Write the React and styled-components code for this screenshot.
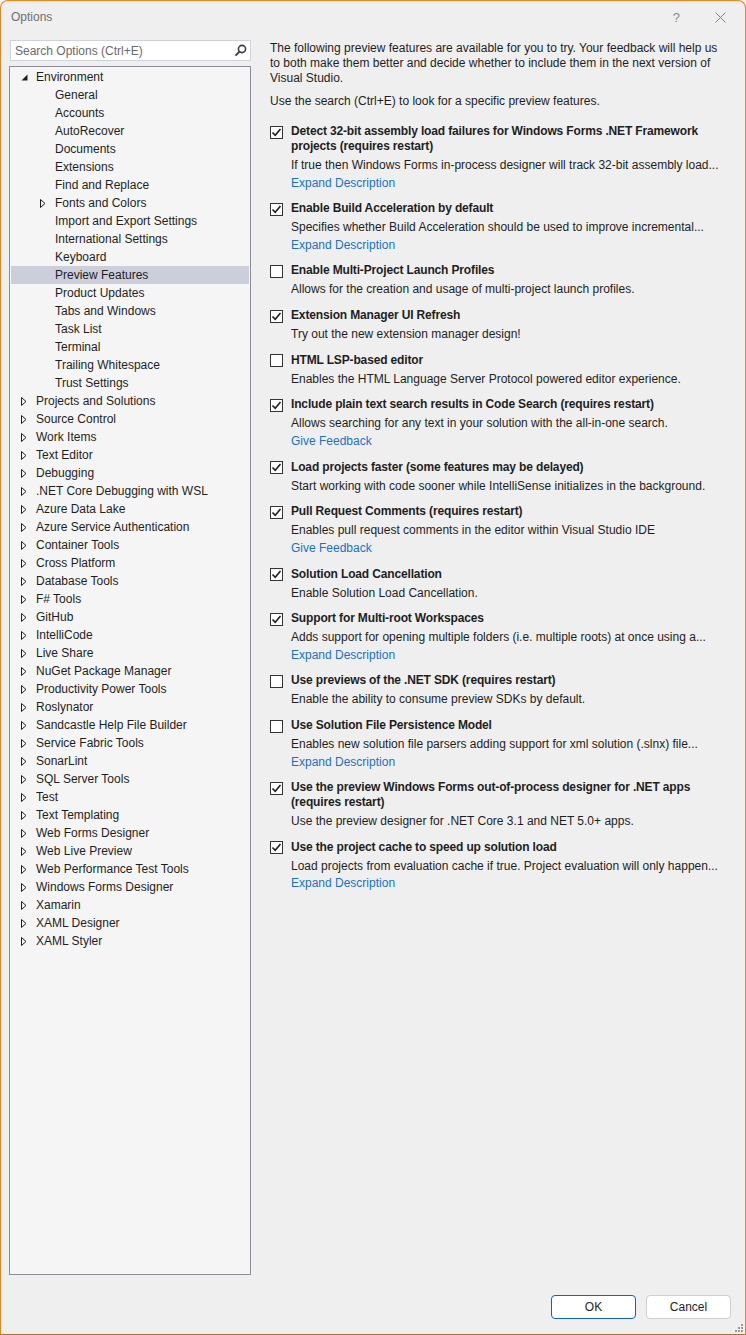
import React from 'react'
import styled, { createGlobalStyle } from 'styled-components';

const GlobalStyle = createGlobalStyle`
    html, body {
        margin: 0;
        padding: 0;
        background: #f3f3f3;
    }
    body {
        font-family: "Liberation Sans", Arial, sans-serif;
        font-size: 12px;
        color: #1e1e1e;
    }
`;

const treeItems = [
    { label: 'Environment', level: 0, state: 'open' },
    { label: 'General', level: 1 },
    { label: 'Accounts', level: 1 },
    { label: 'AutoRecover', level: 1 },
    { label: 'Documents', level: 1 },
    { label: 'Extensions', level: 1 },
    { label: 'Find and Replace', level: 1 },
    { label: 'Fonts and Colors', level: 1, state: 'closed' },
    { label: 'Import and Export Settings', level: 1 },
    { label: 'International Settings', level: 1 },
    { label: 'Keyboard', level: 1 },
    { label: 'Preview Features', level: 1, selected: true },
    { label: 'Product Updates', level: 1 },
    { label: 'Tabs and Windows', level: 1 },
    { label: 'Task List', level: 1 },
    { label: 'Terminal', level: 1 },
    { label: 'Trailing Whitespace', level: 1 },
    { label: 'Trust Settings', level: 1 },
    ...[
        'Projects and Solutions', 'Source Control', 'Work Items', 'Text Editor', 'Debugging',
        '.NET Core Debugging with WSL', 'Azure Data Lake', 'Azure Service Authentication',
        'Container Tools', 'Cross Platform', 'Database Tools', 'F# Tools', 'GitHub', 'IntelliCode',
        'Live Share', 'NuGet Package Manager', 'Productivity Power Tools', 'Roslynator',
        'Sandcastle Help File Builder', 'Service Fabric Tools', 'SonarLint', 'SQL Server Tools',
        'Test', 'Text Templating', 'Web Forms Designer', 'Web Live Preview',
        'Web Performance Test Tools', 'Windows Forms Designer', 'Xamarin', 'XAML Designer', 'XAML Styler',
    ].map(label => ({ label, level: 0, state: 'closed' })),
];

const features = [
    { checked: true, title: 'Detect 32-bit assembly load failures for Windows Forms .NET Framework projects (requires restart)', desc: 'If true then Windows Forms in-process designer will track 32-bit assembly load...', link: 'Expand Description' },
    { checked: true, title: 'Enable Build Acceleration by default', desc: 'Specifies whether Build Acceleration should be used to improve incremental...', link: 'Expand Description' },
    { checked: false, title: 'Enable Multi-Project Launch Profiles', desc: 'Allows for the creation and usage of multi-project launch profiles.' },
    { checked: true, title: 'Extension Manager UI Refresh', desc: 'Try out the new extension manager design!' },
    { checked: false, title: 'HTML LSP-based editor', desc: 'Enables the HTML Language Server Protocol powered editor experience.' },
    { checked: true, title: 'Include plain text search results in Code Search (requires restart)', desc: 'Allows searching for any text in your solution with the all-in-one search.', link: 'Give Feedback' },
    { checked: true, title: 'Load projects faster (some features may be delayed)', desc: 'Start working with code sooner while IntelliSense initializes in the background.' },
    { checked: true, title: 'Pull Request Comments (requires restart)', desc: 'Enables pull request comments in the editor within Visual Studio IDE', link: 'Give Feedback' },
    { checked: true, title: 'Solution Load Cancellation', desc: 'Enable Solution Load Cancellation.' },
    { checked: true, title: 'Support for Multi-root Workspaces', desc: 'Adds support for opening multiple folders (i.e. multiple roots) at once using a...', link: 'Expand Description' },
    { checked: false, title: 'Use previews of the .NET SDK (requires restart)', desc: 'Enable the ability to consume preview SDKs by default.' },
    { checked: false, title: 'Use Solution File Persistence Model', desc: 'Enables new solution file parsers adding support for xml solution (.slnx) file...', link: 'Expand Description' },
    { checked: true, title: 'Use the preview Windows Forms out-of-process designer for .NET apps (requires restart)', desc: 'Use the preview designer for .NET Core 3.1 and NET 5.0+ apps.' },
    { checked: true, title: 'Use the project cache to speed up solution load', desc: 'Load projects from evaluation cache if true. Project evaluation will only happen...', link: 'Expand Description' },
];

const TreeArrow = ({ state }) => {
    if (state === 'open') {
        return (
            <svg width="7" height="7" viewBox="0 0 7 7">
                <polygon points="6.5,0.5 6.5,6.5 0.5,6.5" fill="#1e1e1e" />
            </svg>
        );
    }
    if (state === 'closed') {
        return (
            <svg width="6" height="9" viewBox="0 0 6 9">
                <polygon points="0.5,0.5 5,4.5 0.5,8.5" fill="none" stroke="#1e1e1e" strokeWidth="1" />
            </svg>
        );
    }
    return null;
};

const CheckBox = ({ checked }) => (
    <Box>
        {checked && (
            <svg width="11" height="11" viewBox="0 0 11 11">
                <polyline points="1.5,5.5 4.2,8.3 9.5,2" fill="none" stroke="#1e1e1e" strokeWidth="1.6" />
            </svg>
        )}
    </Box>
);

const App = () => {
    return (
        <>
            <GlobalStyle />
            <Window>
                <TitleBar>
                    <span className='title'>Options</span>
                    <div className='caption-buttons'>
                        <span className='help'>?</span>
                        <svg width="11" height="11" viewBox="0 0 11 11">
                            <path d="M0.5 0.5 L10.5 10.5 M10.5 0.5 L0.5 10.5" stroke="#808080" strokeWidth="1" />
                        </svg>
                    </div>
                </TitleBar>

                <Body>
                    <LeftColumn>
                        <SearchBox>
                            <span>Search Options (Ctrl+E)</span>
                            <svg width="13" height="13" viewBox="0 0 13 13">
                                <circle cx="8" cy="5" r="3.6" fill="none" stroke="#3c3c3c" strokeWidth="1.6" />
                                <path d="M5.5 7.6 L1.5 11.6" stroke="#3c3c3c" strokeWidth="2" />
                            </svg>
                        </SearchBox>
                        <Tree>
                            {treeItems.map(item => (
                                <TreeRow key={item.label} $level={item.level} $selected={item.selected}>
                                    <span className='arrow'><TreeArrow state={item.state} /></span>
                                    <span>{item.label}</span>
                                </TreeRow>
                            ))}
                        </Tree>
                    </LeftColumn>

                    <RightColumn>
                        <Intro>
                            The following preview features are available for you to try. Your feedback will help us
                            to both make them better and decide whether to include them in the next version of
                            Visual Studio.
                        </Intro>
                        <Hint>Use the search (Ctrl+E) to look for a specific preview features.</Hint>
                        <FeatureList>
                            {features.map(f => (
                                <Feature key={f.title}>
                                    <CheckBox checked={f.checked} />
                                    <div className='feature-text'>
                                        <FeatureTitle>{f.title}</FeatureTitle>
                                        <FeatureDesc>{f.desc}</FeatureDesc>
                                        {f.link && <FeatureLink>{f.link}</FeatureLink>}
                                    </div>
                                </Feature>
                            ))}
                        </FeatureList>
                    </RightColumn>
                </Body>

                <Footer>
                    <DialogButton $primary>OK</DialogButton>
                    <DialogButton>Cancel</DialogButton>
                    <Grip>
                        <svg width="8" height="8" viewBox="0 0 8 8">
                            <rect x="6" y="0" width="2" height="2" fill="#9a9a9a" />
                            <rect x="3" y="3" width="2" height="2" fill="#9a9a9a" />
                            <rect x="6" y="3" width="2" height="2" fill="#9a9a9a" />
                            <rect x="0" y="6" width="2" height="2" fill="#9a9a9a" />
                            <rect x="3" y="6" width="2" height="2" fill="#9a9a9a" />
                            <rect x="6" y="6" width="2" height="2" fill="#9a9a9a" />
                        </svg>
                    </Grip>
                </Footer>
            </Window>
        </>
    )
};

const Window = styled.div`
    position: relative;
    box-sizing: border-box;
    width: 746px;
    height: 1335px;
    display: flex;
    flex-direction: column;
    background-color: #efefef;
    border: 1px solid #e8861c;
    border-bottom-color: #b8701f;
    border-radius: 8px 8px 0 0;
    overflow: hidden;
`;

const TitleBar = styled.div`
    height: 32px;
    display: flex;
    align-items: center;
    justify-content: space-between;
    padding: 0 19px 0 10px;
    flex-shrink: 0;

    .title {
        color: #6e6e6e;
        font-size: 12px;
    }
    .caption-buttons {
        display: flex;
        align-items: center;
        gap: 35px;
    }
    .help {
        color: #8a8a8a;
        font-size: 13px;
    }
`;

const Body = styled.div`
    flex: 1;
    display: flex;
    gap: 19px;
    padding: 7px 24px 0 8px;
    min-height: 0;
`;

const LeftColumn = styled.div`
    width: 242px;
    flex-shrink: 0;
    display: flex;
    flex-direction: column;
    gap: 5px;
`;

const SearchBox = styled.div`
    box-sizing: border-box;
    height: 21px;
    margin-left: 1px;
    display: flex;
    align-items: center;
    justify-content: space-between;
    padding: 0 3px 0 4px;
    background-color: #ffffff;
    border: 1px solid #cfd2da;
    color: #6a6a6a;
`;

const Tree = styled.div`
    flex: 1;
    box-sizing: border-box;
    padding: 1px;
    background-color: #f5f5f5;
    border: 1px solid #8c8d98;
`;

const TreeRow = styled.div`
    height: 18px;
    display: flex;
    align-items: center;
    padding-left: ${p => 9 + p.$level * 19}px;
    background-color: ${p => (p.$selected ? '#cccedb' : 'transparent')};
    white-space: nowrap;

    .arrow {
        width: 15px;
        padding-left: 1px;
        display: flex;
        align-items: center;
        flex-shrink: 0;
    }
`;

const RightColumn = styled.div`
    flex: 1;
    min-width: 0;
    padding-top: 1px;
`;

const Intro = styled.p`
    margin: 0;
    line-height: 15px;
`;

const Hint = styled.p`
    margin: 8px 0 0;
    line-height: 15px;
`;

const FeatureList = styled.div`
    margin-top: 15px;
    display: flex;
    flex-direction: column;
    gap: 10.7px;
`;

const Feature = styled.div`
    display: grid;
    grid-template-columns: 13px 1fr;
    column-gap: 8px;
    align-items: start;
`;

const Box = styled.div`
    box-sizing: border-box;
    width: 13px;
    height: 13px;
    margin-top: 1.5px;
    display: flex;
    align-items: center;
    justify-content: center;
    background-color: #ffffff;
    border: 1px solid #333333;
`;

const FeatureTitle = styled.div`
    font-weight: bold;
    line-height: 15px;
    letter-spacing: -0.15px;
`;

const FeatureDesc = styled.div`
    margin-top: 3px;
    line-height: 16px;
    white-space: nowrap;
`;

const FeatureLink = styled.div`
    margin-top: 1.5px;
    line-height: 16px;
    color: #1a6fcc;
`;

const Footer = styled.div`
    flex-shrink: 0;
    display: flex;
    justify-content: flex-end;
    gap: 10px;
    padding: 20px 14px 15px 0;
`;

const DialogButton = styled.button`
    box-sizing: border-box;
    width: 85px;
    height: 24px;
    font-family: inherit;
    font-size: 12px;
    color: #1e1e1e;
    background-color: #ffffff;
    border: 1px solid ${p => (p.$primary ? '#0a64c2' : '#cfcfcf')};
    border-radius: 4px;
`;

const Grip = styled.div`
    position: absolute;
    right: 2px;
    bottom: 2px;
    display: flex;
`;

export default App
